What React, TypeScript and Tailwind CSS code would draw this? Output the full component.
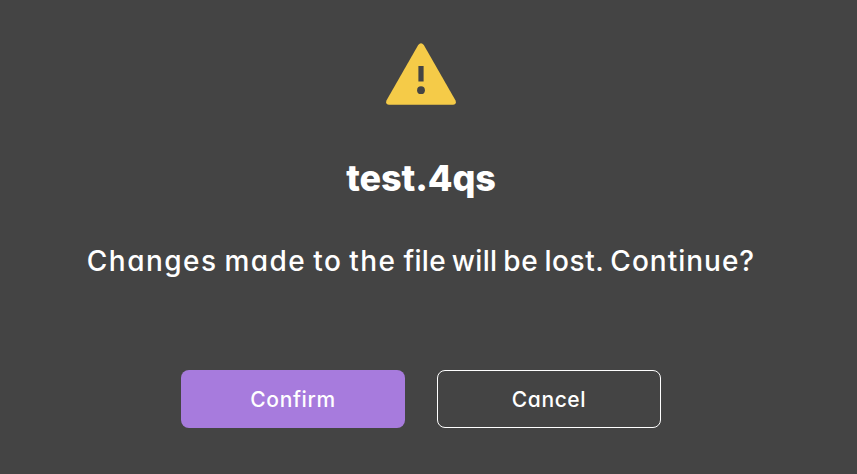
export default function App() {
  return (
    <main className="flex h-[474px] w-[857px] flex-col items-center bg-[#444444] pr-[15px] pt-[43px] font-['Inter','Liberation_Sans',sans-serif] text-white [font-feature-settings:'cv11'_1]">
      <svg className="h-[62px] w-[70px] shrink-0" viewBox="0 0 70 62" aria-hidden="true">
        <path
          fill="#f5cb48"
          d="M32.2 1.9Q35-1.3 37.8 1.9L69.4 57.2Q71 61.4 67 61.7H3Q-1 61.4.6 57.2Z"
        />
        <path fill="#444444" d="M32.4 23h5.2v15.5h-5.2z" />
        <circle fill="#444444" cx="35" cy="47.2" r="3.9" />
      </svg>
      <h1 className="mt-[45px] whitespace-nowrap text-[36px] font-extrabold leading-[56px] tracking-[-0.1px]">
        test.4qs
      </h1>
      <p className="mt-[34px] whitespace-nowrap text-[28px] font-[450] leading-[42px] tracking-[1px] [word-spacing:-1.9px]">
        <span className="tracking-[1.45px]">Changes made to the </span>
        <span className="tracking-[0.3px]">file will </span>
        <span className="tracking-[0.6px]">be lost. </span>
        Continue?
      </p>
      <div className="mt-[88px] flex gap-8">
        <button className="h-[58px] w-[224px] rounded-lg bg-[#a77bdd] pt-px text-[21px] font-[450] tracking-[0.6px]">
          Confirm
        </button>
        <button className="h-[58px] w-[224px] rounded-lg border border-white pt-px text-[21px] font-[450] tracking-[0.6px]">
          Cancel
        </button>
      </div>
    </main>
  );
}
